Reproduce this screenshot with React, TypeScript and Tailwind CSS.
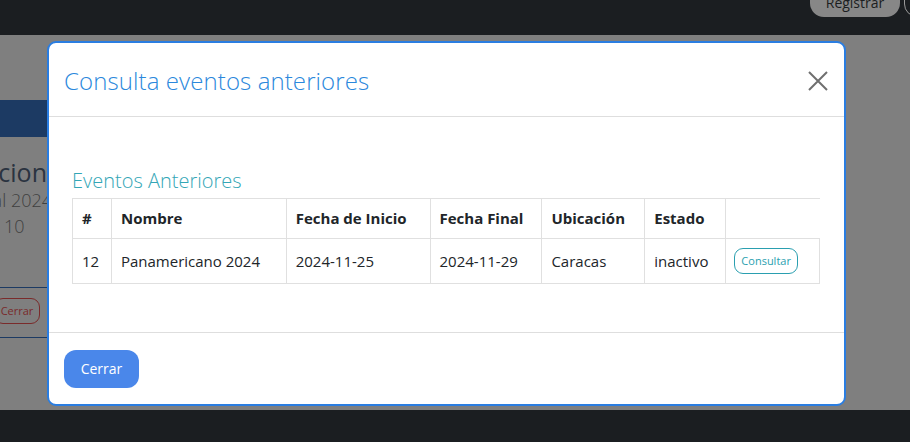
import React from "react";

const font = { fontFamily: '"Open Sans", "Noto Sans", sans-serif' };

export default function App() {
  const headers = ["#", "Nombre", "Fecha de Inicio", "Fecha Final", "Ubicación", "Estado", ""];
  const widths = ["w-[39px]", "w-[175px]", "w-[144px]", "w-[112px]", "w-[103px]", "w-[81px]", "w-[94px]"];
  const row = ["12", "Panamericano 2024", "2024-11-25", "2024-11-29", "Caracas", "inactivo"];
  return (
    <div className="relative w-[910px] h-[442px] overflow-hidden bg-[#7f7f7f]" style={font}>
      {/* navbar */}
      <div className="h-[35px] bg-[#1b1e21] relative">
        <div className="absolute right-[10px] top-[-16px] w-[90px] h-[33px] rounded-[14px] bg-[#878787] flex items-end justify-center pb-[7px] text-[14px] leading-none text-[#1b1e21]">
          Registrar
        </div>
        <div className="absolute right-[-20px] top-[-14px] w-[26px] h-[31px] rounded-full border border-[#9a9a9a]" />
      </div>
      {/* page background content */}
      <div className="h-[375px] flex flex-col">
        <div className="h-[65px]" />
        <div className="h-[37px] w-[47px] bg-[#1c3a63]" />
        <div className="pt-[20px] w-[47px] overflow-hidden flex justify-end">
          <div className="text-[25px] leading-[30px] text-[#2a3340] whitespace-nowrap">Informacion</div>
        </div>
        <div className="w-[47px] overflow-hidden flex justify-end">
          <div className="text-[18px] leading-[26px] text-[#3f3f3f] whitespace-nowrap font-light -mr-[5px]">Final 2024</div>
        </div>
        <div className="w-[47px] text-[18px] leading-[26px] text-[#3f3f3f] whitespace-nowrap pl-[4px] font-light">10</div>
        <div className="h-[48px]" />
        <div className="w-[47px] border-t border-[#1c3a63]" />
        <div className="h-[10px]" />
        <div className="w-[47px] overflow-hidden">
          <div className="-ml-[6px] w-[46px] h-[26px] rounded-[9px] border border-[#7a2b2b] text-[11px] text-[#7a2b2b] flex items-center justify-center">Cerrar</div>
        </div>
        <div className="h-[13px]" />
        <div className="w-[47px] border-t border-[#1c3a63]" />
      </div>
      <div className="h-[32px] bg-[#1b1e21]" />

      {/* modal */}
      <div className="absolute left-[47px] top-[41px] w-[799px] h-[365px] bg-white border-2 border-[#2a7de1] rounded-[9px] flex flex-col">
        <div className="h-[74px] border-b border-[#dedede] flex items-center justify-between pl-[15px] pr-[16px]">
          <div className="text-[24px] font-light text-[#2b88dc] leading-none mt-[2px]" style={{ fontFamily: '"Open Sans", sans-serif', letterSpacing: "0.1px" }}>
            Consulta eventos anteriores
          </div>
          <svg width="20" height="20" viewBox="0 0 20 20" className="mt-[2px]">
            <path d="M1 1 L19 19 M19 1 L1 19" stroke="#6f6f6f" strokeWidth="2" fill="none" />
          </svg>
        </div>
        <div className="h-[216px] pl-[23px] pr-[24px] pt-[46px] border-b border-[#dedede]">
          <div className="text-[20px] font-light text-[#33a6b6] leading-[35px]">Eventos Anteriores</div>
          <table className="border-collapse text-[15px] text-[#212529]">
            <thead>
              <tr className="h-[40px]">
                {headers.map((h, i) => (
                  <th
                    key={i}
                    className={`${widths[i]} text-left font-bold px-[9px] border-t border-[#e0e0e0] ${i === 0 ? "border-l" : ""} ${i < 6 ? "border-r" : ""} border-[#e0e0e0] whitespace-nowrap`}
                  >
                    {h}
                  </th>
                ))}
              </tr>
            </thead>
            <tbody>
              <tr className="h-[45px]">
                {row.map((c, i) => (
                  <td key={i} className="px-[9px] border border-[#e0e0e0] whitespace-nowrap">
                    {c}
                  </td>
                ))}
                <td className="px-[8px] border border-[#e0e0e0]">
                  <div className="w-[64px] h-[26px] rounded-[9px] border border-[#2a9fb0] text-[11px] text-[#2a9fb0] flex items-center justify-center">
                    Consultar
                  </div>
                </td>
              </tr>
            </tbody>
          </table>
        </div>
        <div className="flex-1 flex items-center pl-[15px]">
          <div className="w-[75px] h-[38px] rounded-[12px] bg-[#4a87ea] text-white text-[14px] flex items-center justify-center">
            Cerrar
          </div>
        </div>
      </div>
    </div>
  );
}
